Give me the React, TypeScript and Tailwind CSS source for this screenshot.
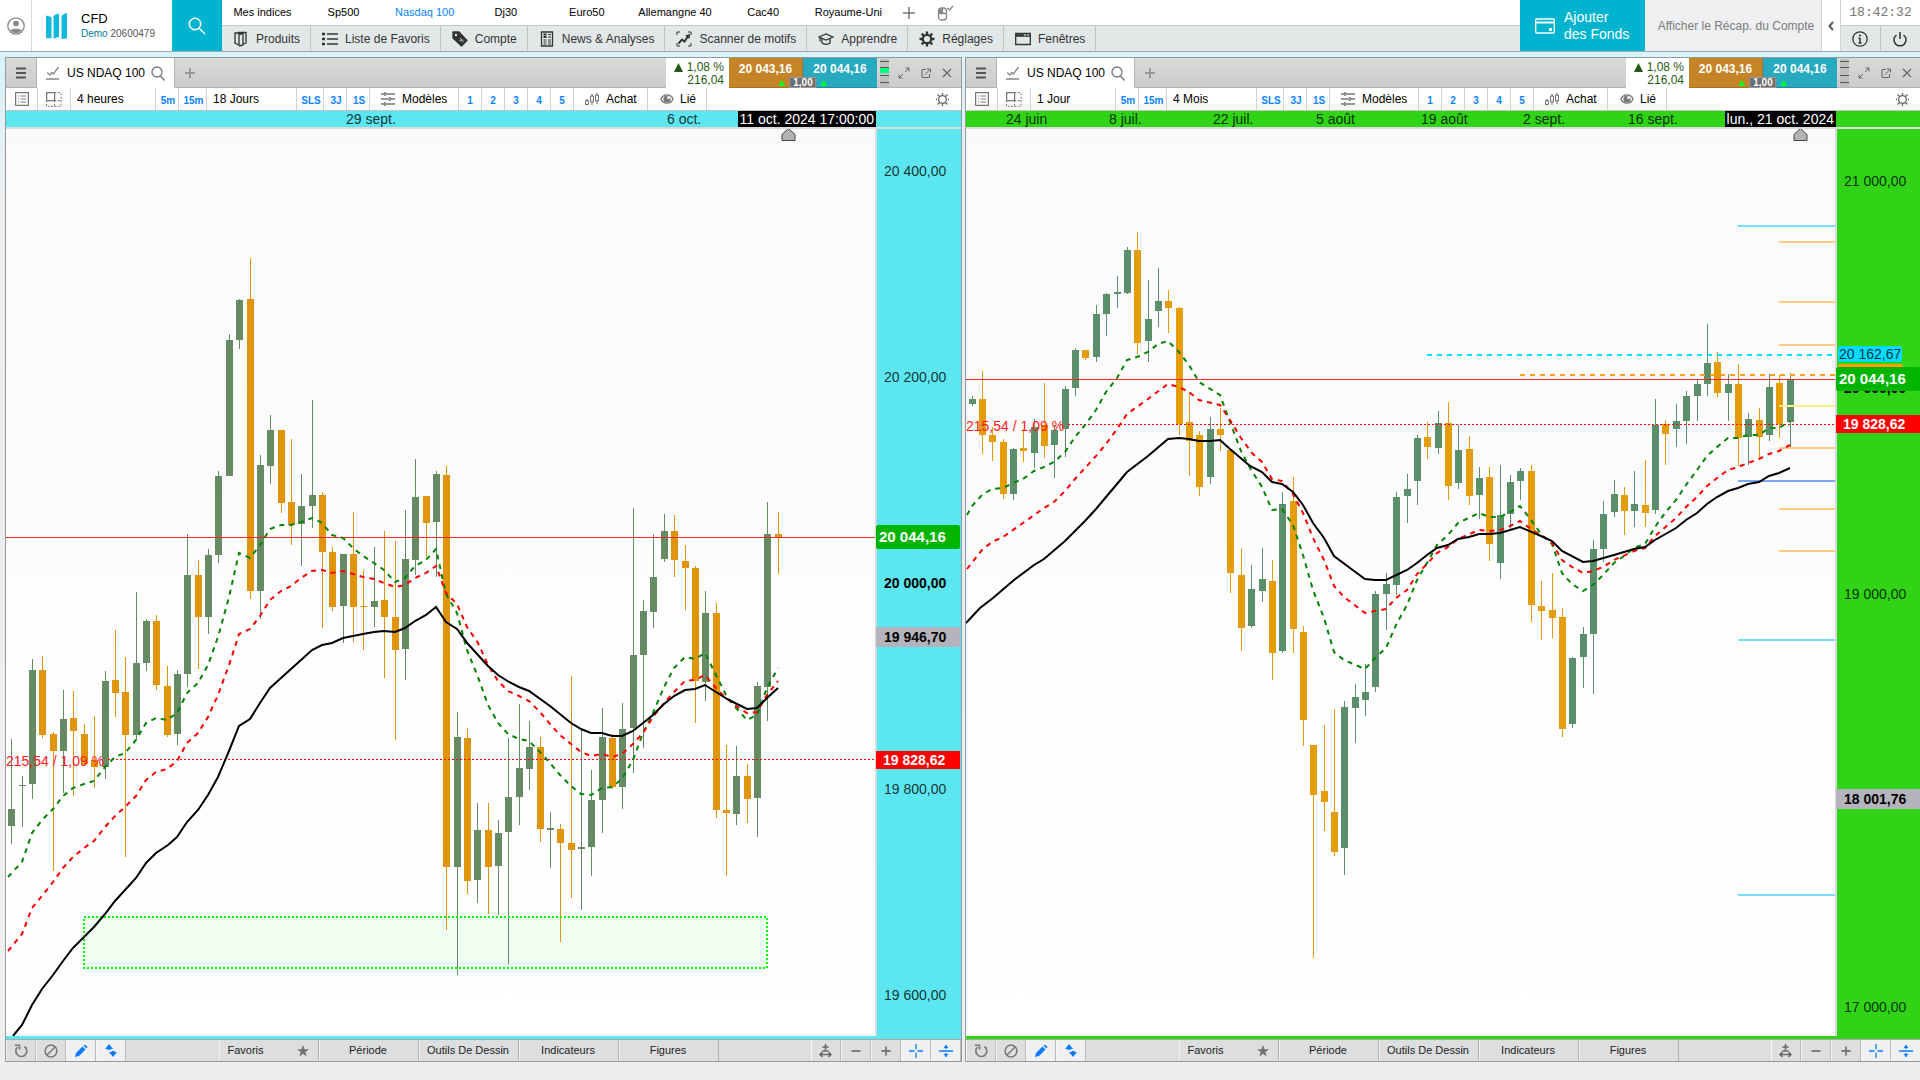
import React from "react";

type Candle = [x: number, high: number, top: number, bottom: number, low: number, up: 0 | 1];

const LEFT_CANDLES: Candle[] = [
  [11, 739, 809, 826, 844, 1], [22, 776, 785, 786, 827, 1], [32, 659, 670, 784, 799, 1], [42, 656, 670, 735, 738, 0],
  [53, 732, 734, 751, 871, 0], [63, 690, 719, 751, 793, 1], [73, 691, 718, 731, 796, 0], [84, 724, 734, 764, 766, 0],
  [94, 716, 760, 767, 788, 0], [105, 671, 681, 767, 779, 1], [115, 630, 680, 693, 717, 0], [125, 657, 692, 735, 857, 0],
  [136, 592, 663, 735, 739, 1], [146, 619, 621, 663, 671, 1], [156, 615, 621, 685, 690, 0], [167, 666, 686, 735, 737, 0],
  [177, 670, 674, 734, 745, 1], [187, 534, 575, 674, 687, 1], [198, 560, 575, 617, 669, 0], [208, 549, 555, 617, 634, 1],
  [218, 471, 476, 555, 563, 1], [229, 334, 340, 476, 476, 1], [239, 299, 300, 340, 349, 1], [250, 258, 299, 591, 599, 0],
  [260, 455, 465, 591, 619, 1], [270, 415, 430, 466, 484, 1], [281, 430, 430, 503, 513, 0], [291, 439, 502, 525, 545, 0],
  [301, 474, 506, 524, 566, 1], [312, 400, 495, 506, 528, 1], [322, 492, 495, 552, 628, 0], [332, 547, 552, 607, 611, 0],
  [343, 554, 554, 606, 643, 1], [353, 512, 554, 607, 642, 0], [363, 570, 606, 607, 650, 0], [374, 547, 601, 607, 627, 1],
  [384, 531, 600, 617, 678, 0], [395, 541, 617, 650, 740, 0], [405, 510, 559, 649, 680, 1], [415, 459, 497, 560, 575, 1],
  [426, 496, 496, 523, 557, 0], [436, 471, 474, 522, 577, 1], [446, 466, 475, 867, 930, 0], [457, 712, 737, 867, 975, 1],
  [467, 728, 738, 881, 894, 0], [477, 803, 830, 880, 903, 1], [488, 803, 830, 867, 914, 0], [498, 820, 833, 866, 915, 1],
  [508, 738, 797, 832, 964, 1], [519, 704, 768, 797, 825, 1], [529, 721, 747, 769, 790, 1], [540, 737, 747, 829, 842, 0],
  [550, 812, 828, 830, 868, 1], [560, 824, 829, 843, 942, 0], [571, 676, 843, 850, 898, 0], [581, 730, 847, 849, 910, 1],
  [591, 770, 800, 847, 876, 1], [602, 708, 737, 800, 833, 1], [612, 734, 738, 787, 789, 0], [622, 703, 729, 787, 809, 1],
  [633, 508, 655, 728, 773, 1], [643, 600, 611, 655, 748, 1], [653, 534, 577, 612, 628, 1], [664, 514, 531, 559, 562, 1],
  [674, 515, 531, 560, 577, 0], [685, 545, 561, 568, 610, 0], [695, 566, 568, 681, 723, 0], [705, 591, 613, 682, 701, 1],
  [716, 603, 613, 810, 818, 0], [726, 745, 810, 813, 876, 0], [736, 746, 776, 814, 825, 1], [747, 764, 776, 799, 823, 0],
  [757, 682, 686, 798, 837, 1], [767, 502, 534, 687, 721, 1], [778, 512, 534, 537, 574, 0],
];

const RIGHT_CANDLES: Candle[] = [
  [972, 396, 399, 404, 406, 1], [982, 371, 399, 435, 454, 0], [992, 427, 435, 442, 461, 0], [1003, 439, 442, 494, 499, 0],
  [1013, 448, 449, 494, 500, 1], [1023, 429, 448, 451, 462, 0], [1034, 419, 427, 453, 468, 1], [1044, 383, 425, 446, 458, 0],
  [1054, 425, 430, 445, 478, 1], [1065, 386, 389, 429, 457, 1], [1075, 348, 350, 388, 396, 1], [1085, 350, 350, 358, 360, 0],
  [1096, 305, 314, 357, 362, 1], [1106, 293, 294, 314, 336, 1], [1117, 276, 292, 294, 308, 1], [1127, 247, 250, 293, 294, 1],
  [1137, 232, 250, 343, 354, 0], [1148, 280, 319, 341, 362, 1], [1158, 268, 301, 311, 327, 1], [1168, 290, 301, 308, 333, 0],
  [1179, 307, 308, 424, 435, 0], [1189, 392, 422, 441, 476, 0], [1199, 431, 435, 487, 496, 0], [1210, 417, 429, 477, 484, 1],
  [1220, 408, 429, 435, 451, 0], [1230, 450, 450, 573, 593, 0], [1241, 548, 575, 628, 651, 0], [1251, 565, 589, 626, 628, 1],
  [1262, 548, 579, 591, 602, 1], [1272, 560, 581, 653, 680, 0], [1282, 492, 504, 651, 653, 1], [1293, 477, 501, 629, 653, 0],
  [1303, 626, 632, 720, 746, 0], [1313, 745, 745, 795, 958, 0], [1324, 725, 791, 802, 831, 0], [1334, 709, 812, 852, 856, 0],
  [1344, 701, 707, 848, 875, 1], [1355, 684, 697, 708, 743, 1], [1365, 664, 692, 700, 716, 1], [1375, 591, 594, 687, 692, 1],
  [1386, 573, 584, 594, 630, 1], [1396, 492, 497, 585, 595, 1], [1407, 474, 489, 496, 523, 1], [1417, 435, 438, 481, 505, 1],
  [1427, 422, 437, 447, 459, 0], [1438, 411, 423, 448, 454, 1], [1448, 402, 423, 486, 500, 0], [1458, 425, 450, 483, 489, 1],
  [1469, 436, 449, 496, 505, 0], [1479, 467, 478, 495, 519, 1], [1489, 467, 477, 544, 561, 0], [1500, 465, 515, 563, 579, 1],
  [1510, 475, 482, 514, 529, 1], [1520, 468, 471, 481, 500, 1], [1531, 465, 471, 605, 622, 0], [1541, 581, 606, 611, 640, 0],
  [1552, 573, 610, 618, 638, 0], [1562, 608, 617, 729, 737, 0], [1572, 657, 658, 724, 728, 1], [1583, 627, 634, 657, 688, 1],
  [1593, 540, 549, 634, 694, 1], [1603, 501, 514, 549, 562, 1], [1614, 480, 494, 512, 517, 1], [1624, 487, 495, 511, 535, 0],
  [1634, 471, 504, 511, 527, 1], [1645, 460, 505, 513, 527, 0], [1655, 399, 425, 510, 514, 1], [1665, 420, 424, 434, 465, 0],
  [1676, 404, 421, 429, 447, 1], [1686, 391, 396, 421, 444, 1], [1697, 380, 384, 396, 421, 1], [1707, 324, 363, 384, 396, 1],
  [1717, 352, 362, 393, 397, 0], [1728, 374, 384, 393, 421, 1], [1738, 364, 384, 438, 466, 0], [1748, 413, 419, 437, 465, 1],
  [1759, 408, 420, 437, 460, 0], [1769, 374, 387, 435, 441, 1], [1779, 375, 383, 424, 438, 0], [1790, 373, 380, 422, 448, 1],
];

const LEFT_SLOW =
  "13,1036 22,1025 32,1005 42,989 53,975 63,961 73,948 84,937 94,927 105,914 115,901 125,890 136,878 146,863 156,853 168,845 177,837 187,822 198,810 208,795 218,777 229,751 239,726 250,719 260,703 270,688 281,678 291,669 301,660 312,650 322,645 332,643 343,638 353,636 363,634 374,632 384,631 395,632 405,628 415,621 426,615 436,607 446,622 457,629 468,644 488,666 498,675 509,682 519,687 529,691 550,706 571,723 581,729 591,733 602,733 612,736 622,736 633,731 643,723 653,715 664,704 674,696 685,690 695,689 705,685 716,692 727,699 737,704 747,709 757,708 767,698 778,688";
const LEFT_MID =
  "8,951 22,934 32,908 42,896 53,882 63,868 73,857 84,848 94,841 105,827 115,816 125,807 136,796 146,780 156,772 167,769 177,761 187,743 198,733 208,717 218,695 229,665 232,656 239,634 250,629 260,616 270,600 281,591 291,586 301,578 312,571 322,570 332,573 343,571 353,574 363,577 374,579 384,583 395,587 405,585 415,578 426,573 436,566 446,593 457,604 467,627 478,643 488,665 498,681 508,691 519,696 529,701 540,712 550,724 560,735 571,744 581,752 591,756 602,754 612,757 622,754 633,744 643,733 653,717 664,703 674,692 685,681 695,680 705,675 716,688 726,698 736,706 747,713 757,712 767,695 778,681";
const LEFT_FAST =
  "8,877 22,862 32,833 42,820 53,809 63,796 73,788 84,784 94,781 105,767 115,757 125,753 136,740 146,723 156,718 167,720 177,713 187,693 198,683 208,665 218,637 229,597 239,553 250,558 260,545 270,529 281,525 291,525 301,522 312,518 322,523 332,535 343,538 353,548 363,556 374,563 384,570 395,582 405,578 415,566 426,560 436,549 446,594 457,613 467,650 478,677 488,705 498,723 508,734 519,739 529,741 540,752 550,763 560,775 571,786 581,794 591,795 602,788 612,787 622,779 633,760 643,733 653,713 664,687 674,668 685,657 695,659 705,653 716,675 726,695 736,708 747,720 757,715 767,688 778,668";
const RIGHT_SLOW =
  "966,623 980,608 993,598 1014,580 1034,565 1044,559 1065,541 1085,521 1096,509 1106,497 1117,484 1127,472 1148,456 1168,439 1179,438 1189,439 1199,441 1210,441 1220,440 1230,449 1250,466 1262,472 1272,482 1282,484 1293,492 1303,505 1313,523 1324,538 1334,556 1350,568 1365,579 1375,580 1386,580 1407,570 1417,563 1427,555 1437,548 1448,545 1458,539 1469,537 1479,534 1489,534 1500,533 1520,527 1541,536 1552,541 1562,551 1583,562 1593,561 1614,555 1634,549 1645,547 1655,540 1676,528 1686,520 1697,513 1707,504 1717,497 1728,491 1738,488 1748,484 1759,482 1769,476 1779,473 1790,468";
const RIGHT_MID =
  "967,569 982,550 992,542 1003,537 1023,523 1044,508 1054,502 1065,491 1075,479 1085,468 1096,456 1106,444 1117,429 1127,414 1148,399 1168,384 1179,387 1189,392 1199,400 1220,405 1230,420 1241,438 1252,453 1262,462 1272,479 1282,481 1293,494 1303,513 1313,538 1324,560 1334,586 1344,597 1365,613 1375,611 1386,609 1396,598 1407,590 1417,574 1427,564 1437,553 1448,547 1458,539 1479,530 1489,531 1500,530 1510,526 1520,521 1531,529 1541,535 1552,543 1562,560 1572,567 1583,573 1593,571 1603,567 1614,560 1634,551 1645,548 1655,536 1676,518 1686,507 1697,497 1707,486 1717,478 1728,470 1738,467 1748,463 1759,459 1769,454 1779,451 1790,445";
const RIGHT_FAST =
  "967,515 972,506 982,495 992,489 1003,488 1013,483 1023,479 1034,471 1044,467 1054,462 1065,452 1075,437 1085,425 1096,410 1106,392 1117,378 1127,360 1137,357 1148,352 1158,344 1168,341 1179,352 1189,365 1199,382 1220,395 1230,422 1241,451 1250,468 1262,487 1272,510 1282,509 1293,525 1303,555 1313,590 1324,618 1334,652 1344,660 1365,669 1375,658 1386,648 1396,625 1407,605 1417,580 1427,563 1437,545 1448,535 1458,523 1479,513 1489,517 1500,517 1510,512 1520,506 1531,520 1541,534 1552,544 1562,573 1572,584 1583,591 1593,585 1603,575 1614,563 1624,556 1634,548 1645,544 1655,527 1665,513 1676,500 1686,485 1697,470 1707,456 1717,447 1728,438 1738,438 1748,435 1759,435 1769,428 1779,428 1790,421";

interface Level { y: number; x: number; color: string }
const LEVELS: Level[] = [
  { y: 226, x: 1738, color: "#78dcfb" }, { y: 242, x: 1779, color: "#ffcb80" }, { y: 302, x: 1779, color: "#ffcb80" },
  { y: 345, x: 1779, color: "#ffcb80" }, { y: 406, x: 1779, color: "#fbf08a" }, { y: 448, x: 1779, color: "#ffcb80" },
  { y: 481, x: 1738, color: "#7ba7fb" }, { y: 509, x: 1779, color: "#ffcb80" }, { y: 551, x: 1779, color: "#ffcb80" },
  { y: 640, x: 1738, color: "#78dcfb" }, { y: 895, x: 1738, color: "#78dcfb" },
];

interface PriceLabel { price: number; text: string; cls: string }
interface ChartConfig {
  id: string;
  originX: number;
  period: string;
  range: string;
  axisBg: string;
  active: boolean;
  up: string;
  down: string;
  candles: Candle[];
  slow: string;
  mid: string;
  fast: string;
  lastY: number;
  closeY: number;
  dates: { x: number; text: string }[];
  cursorDate: string;
  markerX: number;
  priceY: (p: number) => number;
  labels: PriceLabel[];
}

const PLAIN = "px-[7px] text-black/80";
const BOLD = "px-[7px] font-bold text-black";
const GRAY = "-ml-px w-full bg-[#b5b4bc] py-[3px] pl-[8px] font-bold text-black";
const RED = "-ml-px w-full bg-[#fe0000] py-[2px] pl-[7px] font-bold text-white";
const GREEN = "-ml-px w-full rounded-[2px] bg-[#00b400] py-[5px] pl-[3px] text-[15px] font-bold text-white";

const CHARTS: ChartConfig[] = [
  {
    id: "h4", originX: 6, period: "4 heures", range: "18 Jours", axisBg: "bg-[#5ce6f0]", active: true,
    up: "#658a64", down: "#e09409", candles: LEFT_CANDLES, slow: LEFT_SLOW, mid: LEFT_MID, fast: LEFT_FAST,
    lastY: 537, closeY: 759,
    dates: [{ x: 340, text: "29 sept." }, { x: 661, text: "6 oct." }],
    cursorDate: "11 oct. 2024 17:00:00", markerX: 782,
    priceY: (p) => Math.round(454 + (20000 - p) * 1.031),
    labels: [
      { price: 20400, text: "20 400,00", cls: PLAIN }, { price: 20200, text: "20 200,00", cls: PLAIN },
      { price: 20000, text: "20 000,00", cls: BOLD }, { price: 19800, text: "19 800,00", cls: PLAIN },
      { price: 19600, text: "19 600,00", cls: PLAIN }, { price: 19948, text: "19 946,70", cls: GRAY },
      { price: 19828.62, text: "19 828,62", cls: RED }, { price: 20044.16, text: "20 044,16", cls: GREEN },
    ],
  },
  {
    id: "d1", originX: 966, period: "1 Jour", range: "4 Mois", axisBg: "bg-[#30d315]", active: false,
    up: "#5b8f6b", down: "#e49c09", candles: RIGHT_CANDLES, slow: RIGHT_SLOW, mid: RIGHT_MID, fast: RIGHT_FAST,
    lastY: 379, closeY: 424,
    dates: [
      { x: 40, text: "24 juin" }, { x: 143, text: "8 juil." }, { x: 247, text: "22 juil." }, { x: 350, text: "5 août" },
      { x: 455, text: "19 août" }, { x: 557, text: "2 sept." }, { x: 662, text: "16 sept." },
    ],
    cursorDate: "lun., 21 oct. 2024", markerX: 1794,
    priceY: (p) => Math.round(465 + (19000 - p) * 0.2063),
    labels: [
      { price: 21000, text: "21 000,00", cls: PLAIN }, { price: 20000, text: "20 000,00", cls: BOLD },
      { price: 19000, text: "19 000,00", cls: PLAIN }, { price: 17000, text: "17 000,00", cls: PLAIN },
      { price: 18007, text: "18 001,76", cls: GRAY },
      { price: 20069, text: "", cls: "ml-px h-[18px] w-[65px] rounded-[3px] bg-[#ff9f0a]" },
      { price: 20162.67, text: "20 162,67", cls: "ml-px rounded-[3px] bg-[#00dcff] px-px py-px text-black/80" },
      { price: 19826, text: "19 828,62", cls: RED }, { price: 20044.16, text: "20 044,16", cls: GREEN },
    ],
  },
];

const Icon = ({ w = 16, h = 16, vb, children, cls = "" }: { w?: number; h?: number; vb?: string; children: React.ReactNode; cls?: string }) => (
  <svg aria-hidden="true" width={w} height={h} viewBox={vb ?? `0 0 ${w} ${h}`} fill="none" stroke="currentColor" strokeWidth="1.3" className={`shrink-0 ${cls}`}>
    {children}
  </svg>
);

const INDICES = ["Mes indices", "Sp500", "Nasdaq 100", "Dj30", "Euro50", "Allemangne 40", "Cac40", "Royaume-Uni"];

const MENU: { label: string; icon: React.ReactNode }[] = [
  { label: "Produits", icon: <><path d="M2 2h7l-3 1v11l-4-2z" /><path d="M6 3.500l4-1V14l-4 1" /><path d="M5 1.500h8V12l-3 1" /></> },
  { label: "Liste de Favoris", icon: <><path d="M5 3h11M5 8h11M5 13h11" strokeWidth="1.500" /><path d="M0 3h3M0 8h3M0 13h3" strokeWidth="2.600" /></> },
  { label: "Compte", icon: <><path d="M1 1h6l8 8.500-5.500 5.500L1 7z" fill="currentColor" strokeLinejoin="round" /><circle cx="4" cy="4" r="1.200" fill="#e2e8e8" stroke="none" /><path d="M7.500 9.500c2 2 1-2 3-.5M8 7l3.500 4" stroke="#e2e8e8" strokeWidth=".9" /></> },
  { label: "News & Analyses", icon: <><path d="M2.500 1h11v14h-11z" /><path d="M4.500 3.500h3M4.500 6h3" strokeWidth="2" /><path d="M9 3.500h3M9 6h3M4.500 9h3M9 9h3M4.500 11h3M9 11h3M4.500 13h3M9 13h3" strokeWidth="1" /></> },
  { label: "Scanner de motifs", icon: <><path d="M1 4V1h3M12 1h3v3M15 12v3h-3M4 15H1v-3" strokeWidth="1" /><path d="M2.500 12.500l3.500-4 2.500 2 4-6" strokeWidth="1.900" /><path d="M9 4.500l5-1.500-.5 5z" fill="currentColor" stroke="none" /></> },
  { label: "Apprendre", icon: <><path d="M1 6l7-3 7 3-7 3z" /><path d="M4 7.500V12c2 1.700 6 1.700 8 0V7.500M2 6.500v4" /></> },
  { label: "Réglages", icon: <><circle cx="8" cy="8" r="4.200" strokeWidth="2.200" /><path d="M8 .5V3M8 13v2.500M.5 8H3M13 8h2.500M2.700 2.700l1.800 1.800M11.500 11.500l1.800 1.800M2.700 13.300l1.800-1.800M11.500 4.500l1.800-1.800" strokeWidth="2.400" /></> },
  { label: "Fenêtres", icon: <><path d="M.7 2.500h14.600v11H.7z" /><path d="M1 4.500h14" strokeWidth="2.600" /><path d="M9 4h2M12 4h2" stroke="#fff" strokeWidth="1" /></> },
];

function Header() {
  return (
    <header className="flex h-[52px] shrink-0 border-b border-[#9fa9b3] bg-white text-[12px] text-[#333]">
      <button aria-label="Profil" className="flex w-8 items-center justify-center border-r border-[#d5d8da] text-[#85878a]">
        <Icon w={18} h={18}>
          <circle cx="9" cy="9" r="8.200" />
          <circle cx="9" cy="6.500" r="2.800" fill="currentColor" stroke="none" />
          <path d="M3.300 13.500c1-2.500 10.400-2.500 11.400 0a7.500 7.500 0 0 1-11.400 0z" fill="currentColor" stroke="none" />
        </Icon>
      </button>
      <div className="flex w-[140px] items-center gap-[14px] pl-[14px]">
        <svg aria-hidden="true" width="21" height="26" viewBox="0 0 21 26" className="shrink-0 fill-[#12b9dc]">
          <path d="M0 2.500L5.500 4v21.500L0 25zM7.500 3.500C8 2 10 1 13 .5v23.500c-2 .3-4 .9-5.500 1.800zM15.500 3c1-1.500 3-2.500 5.500-3v25.500c-2 0-4 .2-5.500.5z" />
        </svg>
        <div className="leading-none">
          <div className="text-[13px] leading-[16px] text-black">CFD</div>
          <div className="text-[10px] leading-[14px] text-[#555]"><span className="text-[#007a99]">Demo</span> 20600479</div>
        </div>
      </div>
      <button aria-label="Rechercher" className="flex w-[50px] items-center justify-center bg-[#00b3cf] text-white">
        <Icon w={18} h={18}><circle cx="7" cy="7" r="5.700" strokeWidth="1.500" /><path d="M11 11l6 6" strokeWidth="1.500" /></Icon>
      </button>
      <div className="flex min-w-0 flex-1 flex-col">
        <nav aria-label="Indices" className="flex h-[26px] items-center border-b border-[#c3c8ca] text-[11px] text-black">
          {INDICES.map((n) => (
            <button key={n} className={`min-w-[81px] px-[11px] text-center whitespace-nowrap ${n === "Nasdaq 100" ? "text-[#0a84ff]" : ""}`}>{n}</button>
          ))}
          <button aria-label="Ajouter une vue" className="ml-[10px] text-[#777]"><Icon w={12} h={12}><path d="M6 0v12M0 6h12" strokeWidth="1.500" /></Icon></button>
          <button aria-label="Options de souris" className="ml-[22px] text-[#85878a]">
            <Icon w={17} h={16}><rect x="1.500" y="3" width="8" height="12" rx="3" /><path d="M2 8.500h7M5.500 3v5" /><path d="M2 4h3v4H2z" fill="currentColor" stroke="none" /><path d="M10.500 3l1.800 2L16 1" /></Icon>
          </button>
        </nav>
        <nav aria-label="Menu principal" className="flex flex-1 bg-[#e2e8e8]">
          {MENU.map((m) => (
            <button key={m.label} className="flex items-center gap-[7px] border-r border-[#c0c4c6] pr-[10px] pl-[11px] whitespace-nowrap">
              <Icon>{m.icon}</Icon>{m.label}
            </button>
          ))}
        </nav>
      </div>
      <button className="flex w-[125px] items-center gap-[9px] bg-[#00b3cf] pl-[15px] text-left text-[14px] leading-[17px] text-white">
        <Icon w={20} h={16}><rect x=".7" y="1" width="18.600" height="14" rx="1" /><path d="M1 4.500h18" strokeWidth="2" /><path d="M14 10h3v3h-3z" fill="currentColor" stroke="none" /></Icon>
        <span>Ajouter<br />des Fonds</span>
      </button>
      <button className="w-[177px] border-r border-[#d0d2d4] bg-[#eeeff1] pl-[6px] text-center whitespace-nowrap text-[#7a7c7e]">Afficher le Récap. du Compte</button>
      <button aria-label="Déplier" className="flex w-[19px] items-center justify-center border-r border-[#d0d2d4] text-[#555]">
        <Icon w={6} h={10}><path d="M5 1L1.500 5 5 9" strokeWidth="1.900" /></Icon>
      </button>
      <div className="flex w-[79px] flex-col">
        <time className="flex h-[26px] items-center justify-center border-b border-[#c3c8ca] font-['Liberation_Mono',monospace] text-[13px] text-[#777]">18:42:32</time>
        <div className="grid flex-1 grid-cols-2 bg-[#e2e8e8]">
          <button aria-label="Informations" className="flex items-center justify-center border-r border-[#c0c4c6]">
            <Icon><circle cx="8" cy="8" r="7.200" /><path d="M8 7v5M6.500 7.300H8M6.500 12h3" strokeWidth="1.500" /><circle cx="8" cy="4.500" r="1.100" fill="currentColor" stroke="none" /></Icon>
          </button>
          <button aria-label="Déconnexion" className="flex items-center justify-center">
            <Icon><path d="M4.500 4a6 6 0 1 0 7 0M8 1v7" strokeWidth="1.500" /></Icon>
          </button>
        </div>
      </div>
    </header>
  );
}

function TabBar({ active }: { active: boolean }) {
  return (
    <div className="flex h-[30px] bg-linear-to-b from-[#dadada] to-[#cbcbcb] text-[12px]">
      <button aria-label="Menu du graphique" className="flex w-[31px] items-center justify-center border-r border-b border-[#b4b4b4] text-[#555]">
        <Icon w={10} h={12}><path d="M0 1.500h10M0 6h10M0 10.500h10" strokeWidth="1.900" /></Icon>
      </button>
      <div className="flex w-[137px] items-center bg-white pl-[9px] text-black">
        <Icon w={13} h={14} cls="text-[#888]"><path d="M0 13h13M1 6.500l3 2.500 2-2.500 1.500 1.500L12.500 1" /></Icon>
        <button className="ml-2 whitespace-nowrap">US NDAQ 100</button>
        <button aria-label="Changer de marché" className="ml-[6px] text-[#777]"><Icon w={14} h={15}><circle cx="6" cy="6" r="5" /><path d="M9.500 10l4 4.500" strokeWidth="1.500" /></Icon></button>
      </div>
      <div className="flex flex-1 items-center border-b border-l border-[#b4b4b4] pl-[10px] text-[#888]">
        <button aria-label="Nouvel onglet"><Icon w={10} h={10}><path d="M5 0v10M0 5h10" strokeWidth="1.500" /></Icon></button>
      </div>
      <div className="w-[63px] bg-white pt-[3px] pr-[5px] text-right leading-[13px] text-[#1f5a14]">
        <div className="flex items-center justify-end gap-1">
          <svg aria-hidden="true" width="9" height="9" viewBox="0 0 9 9" className="shrink-0 fill-current"><path d="M4.500 0L9 9H0z" /></svg>1,08 %
        </div>
        <div>216,04</div>
      </div>
      <div className="relative grid w-[148px] grid-cols-2 text-center font-bold text-white">
        <button className="border-r border-b border-[#a87020] bg-[#c58427] pb-[8px]">20 043,16</button>
        <button className="border-b border-[#2391a3] bg-[#27aabf] pb-[8px]">20 044,16</button>
        <span className="absolute bottom-0 left-1/2 flex -translate-x-1/2 items-center gap-1">
          <svg aria-hidden="true" width="7" height="6" viewBox="0 0 7 6" className="fill-[#00ff22]"><path d="M3.500 0L7 6H0z" /></svg>
          <span className="border border-[#999] bg-[#6d6f71] px-[3px] text-[10px] leading-[9px]">1,00</span>
          <svg aria-hidden="true" width="7" height="6" viewBox="0 0 7 6" className="fill-[#00ff22]"><path d="M3.500 0L7 6H0z" /></svg>
        </span>
      </div>
      <div className="flex w-[84px] items-center gap-[11px] border-b border-[#b4b4b4] pl-[3px] text-[#666]">
        <Icon w={9} h={28} cls="-mr-[2px]">
          <path d="M0 0h9v28H0z" fill="#bfbfbf" stroke="none" />
          {active && <path d="M0 9h9v5H0z" fill="#00ff7b" stroke="none" />}
          <path d="M0 2.500h9M0 8.500h9M0 16.500h9M0 23.500h9" stroke="#555" strokeWidth="1" />
        </Icon>
        <button aria-label="Agrandir"><Icon w={12} h={12}><path d="M7 5l4-4M7.500 1H11v3.500M5 7l-4 4M1 7.500V11h3.500" strokeWidth="1" /></Icon></button>
        <button aria-label="Détacher"><Icon w={10} h={10}><path d="M5 1.500H1v8h7.500V6M6 1h3.500v3.500M9.500 1L4 6.500" strokeWidth="1" /></Icon></button>
        <button aria-label="Fermer"><Icon w={10} h={10}><path d="M1 1l8 8M9 1L1 9" strokeWidth="1.200" /></Icon></button>
      </div>
    </div>
  );
}

function Toolbar({ period, range }: { period: string; range: string }) {
  const cell = "flex items-center border-r border-[#d2d2d2] whitespace-nowrap";
  const quick = "flex items-center justify-center border-r border-[#d2d2d2] text-[10px] font-bold text-[#0a84ff] pt-[2px]";
  return (
    <div className="flex h-[23px] border-b border-[#c4c4c4] bg-white text-[12px] text-black">
      <button aria-label="Liste" className={`${cell} w-8 justify-center text-[#777]`}>
        <Icon w={14} h={14}><path d="M.6.6h12.800v12.800H.6z" /><path d="M3 4h1M5.500 4H11M3 7h1M5.500 7H11M3 10h1M5.500 10H11" strokeWidth="1" /></Icon>
      </button>
      <button aria-label="Disposition" className={`${cell} w-[33px] justify-center text-[#777]`}>
        <Icon w={16} h={15}><path d="M.6.6h8v8h-8z" /><path d="M8.600.6H15v13.800H.6V8.600M8.600 8.600v6M8.600 8.600H15" strokeDasharray="2 1.500" strokeWidth="1" /></Icon>
      </button>
      <button className={`${cell} w-[85px] pl-[6px]`}>{period}</button>
      <button className={`${quick} w-[23px] pl-[2px]`}>5m</button>
      <button className={`${quick} w-[28px] pl-[2px]`}>15m</button>
      <button className={`${cell} w-[90px] pl-[6px]`}>{range}</button>
      <button className={`${quick} w-[27px] pl-[2px]`}>SLS</button>
      <button className={`${quick} w-[23px] pl-[2px]`}>3J</button>
      <button className={`${quick} w-[23px] pl-[2px]`}>1S</button>
      <button className={`${cell} w-[89px] gap-[7px] pl-[11px]`}>
        <Icon w={14} h={14} cls="text-[#777]"><path d="M0 2h3M5 2h9M0 7h8M10 7h4M0 12h3M5 12h9" /><path d="M4 0v4M9 5v4M4 10v4" strokeWidth="1.600" /></Icon>
        Modèles
      </button>
      {["1", "2", "3", "4", "5"].map((n) => <button key={n} className={`${quick} w-[23px]`}>{n}</button>)}
      <button className={`${cell} w-[74px] gap-[7px] pl-[11px]`}>
        <Icon w={14} h={14} cls="text-[#666]"><path d="M.6 8.500h2.800v4H.6zM5.600 4h2.800v6H5.600zM10.600 3h2.800v6h-2.800zM2 7v1.500M7 2v2M7 10v3M12 1v2M12 9v3" strokeWidth="1" /></Icon>
        Achat
      </button>
      <button className={`${cell} w-[59px] gap-[6px] pl-[12px]`}>
        <Icon w={14} h={12} cls="text-[#777]"><path d="M1 6c2-5.500 10-5.500 12 0-2 5.500-10 5.500-12 0z" /><circle cx="7" cy="6" r="3.600" fill="currentColor" stroke="none" /><circle cx="8.500" cy="4.500" r="1.500" fill="#fff" stroke="none" /></Icon>
        Lié
      </button>
      <button aria-label="Réglages du graphique" className="mr-[11px] ml-auto text-[#666]">
        <Icon w={15} h={15}><circle cx="7.500" cy="7.500" r="3.900" /><path d="M7.500 1v2.500M7.500 11.500V14M1 7.500h1M13 7.500h1M2.500 2.500l2.500 2.500M10 10l2.500 2.500M2.500 12.500L5 10M10 5l2.500-2.500" /></Icon>
      </button>
    </div>
  );
}

function BottomBar() {
  const tool = "flex w-[30px] shrink-0 items-center justify-center border-r border-[#b9babc] shadow-[inset_1px_0_0_#f6f6f6]";
  const tab = "w-[100px] shrink-0 border-r border-[#b0b1b3] text-center shadow-[inset_1px_0_0_#f2f2f2] whitespace-nowrap";
  return (
    <div className="flex h-[22px] shrink-0 border-t border-[#a9aaac] bg-[#dddee0] text-[11px] text-[#222]">
      <button aria-label="Actualiser" className={`${tool} text-[#777]`}><Icon w={14} h={14}><path d="M10.500 2.500A5.500 5.500 0 1 1 3.500 3" strokeWidth="1.600" /><path d="M.8 1.300h4.700v4.500" strokeWidth="1.600" /></Icon></button>
      <button aria-label="Effacer" className={`${tool} text-[#777]`}><Icon w={14} h={14}><circle cx="7" cy="7" r="5.900" strokeWidth="1.500" /><path d="M3 11l8-8" strokeWidth="1.500" /></Icon></button>
      <button aria-label="Dessiner" className={`${tool} bg-[#f0f0f2] text-[#0a7cff]`}><Icon w={14} h={14}><path d="M1 13l1-4 6.500-6.500 3 3L5 12zM9.500 1.500l1.500-1 2.500 2.500-1 1.500z" fill="currentColor" stroke="none" /></Icon></button>
      <button aria-label="Trier" className={`${tool} bg-[#f0f0f2] text-[#0a7cff]`}><Icon w={12} h={13}><path d="M0 5l4-5 4 5H6l-1 1H2.500V5zM4 8l4 5 4-5H9.500V7H7L6 8z" fill="currentColor" stroke="none" /></Icon></button>
      <div className="flex-1" />
      <button className={`${tab} flex items-center justify-between pr-[9px] pl-[9px]`}>
        Favoris
        <svg aria-hidden="true" width="12" height="12" viewBox="0 0 12 12" className="fill-[#707274]"><path d="M6 0l1.500 4.300H12L8.400 7l1.300 4.500L6 8.800l-3.700 2.700L3.600 7 0 4.300h4.500z" /></svg>
      </button>
      <button className={tab}>Période</button>
      <button className={tab}>Outils De Dessin</button>
      <button className={tab}>Indicateurs</button>
      <button className={tab}>Figures</button>
      <div className="flex-1" />
      <button aria-label="Échelle" className={`${tool} text-[#666]`}><Icon w={13} h={14}><path d="M6.500 0v6M3.500 3h6" strokeWidth="1.500" /><path d="M1 10.500h11M3.500 8L1 10.500 3.500 13M9.500 8l2.500 2.500L9.500 13M3.500 7h6" strokeWidth="1.500" /></Icon></button>
      <button aria-label="Zoom arrière" className={`${tool} text-[#777]`}><Icon w={10} h={10}><path d="M.5 5h9" strokeWidth="1.800" /></Icon></button>
      <button aria-label="Zoom avant" className={`${tool} text-[#777]`}><Icon w={10} h={10}><path d="M.5 5h9M5 .5v9" strokeWidth="1.800" /></Icon></button>
      <button aria-label="Réticule" className={`${tool} bg-[#f0f0f2] text-[#0a7cff]`}><Icon w={14} h={14}><path d="M0 7h5.500M8.500 7H14M7 0v5.500M7 8.500V14" /></Icon></button>
      <button aria-label="Ajuster" className={`${tool} bg-[#f0f0f2] text-[#0a7cff]`}><Icon w={14} h={14}><path d="M0 7h14M7 1v4M7 9v4" /><path d="M4.500 4L7 1l2.500 3zM4.500 10L7 13l2.500-3z" fill="currentColor" stroke="none" /></Icon></button>
    </div>
  );
}

function Plot({ c }: { c: ChartConfig }) {
  return (
    <div className="relative min-w-0 flex-1 overflow-hidden border-r-2 border-[#d9dadd] bg-linear-to-b from-[#fafafa] to-white">
      <svg role="img" aria-label={`US NDAQ 100, ${c.period}`} className="absolute inset-0 h-full w-full" shapeRendering="crispEdges">
        <g transform={`translate(${-c.originX} -129)`}>
          {c.id === "h4" && <rect x="84" y="917" width="683" height="51" fill="#effef1" />}
          {c.candles.map(([x, high, top, bottom, low, up]) => (
            <g key={x} fill={up ? c.up : c.down}>
              <rect x={x} y={high} width="1" height={low - high} />
              <rect x={x - 3} y={top} width="7" height={bottom - top} />
            </g>
          ))}
          {c.id === "h4" && <rect x="84" y="917" width="683" height="51" fill="none" stroke="#00ff00" strokeWidth="2" strokeDasharray="2 2" />}
          {c.id === "d1" && (
            <>
              {LEVELS.map((l) => <path key={l.y} d={`M${l.x} ${l.y}H4000`} stroke={l.color} strokeWidth="2" />)}
              <path d="M1427 355H4000" stroke="#00dfff" strokeWidth="2" strokeDasharray="5 5" />
              <path d="M1520 375H4000" stroke="#ffa010" strokeWidth="2" strokeDasharray="5 5" />
            </>
          )}
          <rect x={c.originX} y={c.lastY} width="4000" height="1" fill="#ee2a1c" />
          <path d={`M${c.originX + 102} ${c.closeY}.500H5000`} stroke="#ff0000" strokeWidth="1" strokeDasharray="2 2" />
          <g fill="none" strokeWidth="2" shapeRendering="auto">
            <polyline points={c.fast} stroke="#048304" strokeDasharray="5 5" />
            <polyline points={c.mid} stroke="#ff0000" strokeDasharray="5 5" />
            <polyline points={c.slow} stroke="#000" />
          </g>
          <text x={c.originX} y={c.closeY + 7} fontSize="14" fill="#ff1a1a">215,54 / 1,09 %</text>
          <path d={`M${c.markerX} 134.500l6.500-6 6.500 6v6h-13z`} fill="#b3b3b3" stroke="#444" shapeRendering="auto" />
        </g>
      </svg>
    </div>
  );
}

function ChartPanel({ c }: { c: ChartConfig }) {
  return (
    <section aria-label={`US NDAQ 100 ${c.period}`} className="flex min-w-0 flex-col border border-[#98999b] bg-white">
      <TabBar active={c.active} />
      <Toolbar period={c.period} range={c.range} />
      <div className={`relative h-4 shrink-0 text-[14px] leading-4 text-black/80 ${c.axisBg}`}>
        {c.dates.map((d) => (
          <span key={d.text} className="absolute top-0 whitespace-nowrap" style={{ left: d.x }}>{d.text}</span>
        ))}
        <span className="absolute top-0 right-[85px] bg-black px-[2px] whitespace-nowrap text-white">{c.cursorDate}</span>
      </div>
      <div className="h-[2px] shrink-0 bg-[#d9dadd]" />
      <div className="flex min-h-0 flex-1">
        <Plot c={c} />
        <div className={`relative w-[84px] shrink-0 text-[14px] leading-[14px] ${c.axisBg}`}>
          {c.labels.map((l) => (
            <span key={l.price} className={`absolute left-0 -translate-y-1/2 whitespace-nowrap ${l.cls}`} style={{ top: c.priceY(l.price) }}>{l.text}</span>
          ))}
        </div>
      </div>
      <div className={`h-[3px] shrink-0 ${c.axisBg}`} />
      <BottomBar />
    </section>
  );
}

export default function App() {
  return (
    <div className="flex h-screen flex-col overflow-hidden bg-[#edeef0] font-['Liberation_Sans',Arial,sans-serif]">
      <Header />
      <main className="-mr-[2px] grid min-h-0 flex-1 grid-cols-2 gap-[3px] bg-linear-to-b from-[#d8f3fb] to-[#edeef0] to-15% pt-[5px] pb-[18px] pl-[5px]">
        {CHARTS.map((c) => <ChartPanel key={c.id} c={c} />)}
      </main>
    </div>
  );
}
